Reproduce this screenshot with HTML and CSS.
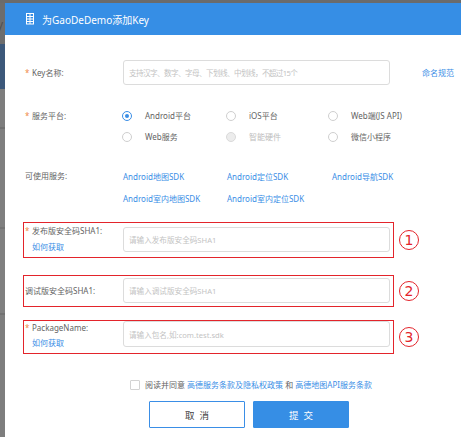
FILE: index.html
```html
<!DOCTYPE html>
<html lang="zh">
<head>
<meta charset="utf-8">
<title>为GaoDeDemo添加Key</title>
<link rel="stylesheet" href="styles.css">
</head>
<body>
<div class="page">
  <div class="backdrop"><span class="ghost">y</span></div>
  <div class="modal">
    <div class="modal-header">
      <svg class="hicon" width="8" height="12" viewBox="0 0 8 12" aria-hidden="true">
        <rect x="0.5" y="0.5" width="7" height="10.5" fill="none" stroke="#fff" stroke-width="1"/>
        <line x1="4" y1="1" x2="4" y2="11" stroke="#fff" stroke-width="1"/>
        <line x1="1" y1="3.5" x2="7" y2="3.5" stroke="#fff" stroke-width="1"/>
        <line x1="1" y1="6" x2="7" y2="6" stroke="#fff" stroke-width="1"/>
        <line x1="1" y1="8.5" x2="7" y2="8.5" stroke="#fff" stroke-width="1"/>
      </svg>
      <span class="title">为GaoDeDemo添加Key</span>
    </div>

    <div class="modal-body">
      <div class="row row-key">
        <div class="label"><span class="req">*</span>Key名称:</div>
        <div class="input"><span class="ph ph-tight">支持汉字、数字、字母、下划线、中划线，不超过15个</span></div>
        <a class="link side-link">命名规范</a>
      </div>

      <div class="row row-platform">
        <div class="label line"><span class="req">*</span>服务平台:</div>
        <div class="options">
          <div class="opt"><span class="radio checked"></span><span>Android平台</span></div>
          <div class="opt"><span class="radio"></span><span>iOS平台</span></div>
          <div class="opt"><span class="radio"></span><span>Web端(JS API)</span></div>
          <div class="opt"><span class="radio"></span><span>Web服务</span></div>
          <div class="opt disabled"><span class="radio"></span><span>智能硬件</span></div>
          <div class="opt"><span class="radio"></span><span>微信小程序</span></div>
        </div>
      </div>

      <div class="row row-services">
        <div class="label line2">可使用服务:</div>
        <div class="services">
          <a class="link">Android地图SDK</a>
          <a class="link">Android定位SDK</a>
          <a class="link">Android导航SDK</a>
          <a class="link">Android室内地图SDK</a>
          <a class="link">Android室内定位SDK</a>
        </div>
      </div>

      <div class="boxrow box1-row">
        <div class="box box1">
          <div class="blabel">
            <div><span class="req">*</span>发布版安全码SHA1:</div>
            <div class="indent"><a class="link">如何获取</a></div>
          </div>
          <div class="input"><span class="ph">请输入发布版安全码SHA1</span></div>
        </div>
        <span class="num">1</span>
      </div>

      <div class="boxrow box2-row">
        <div class="box box2">
          <div class="blabel single">调试版安全码SHA1:</div>
          <div class="input"><span class="ph">请输入调试版安全码SHA1</span></div>
        </div>
        <span class="num">2</span>
      </div>

      <div class="boxrow box3-row">
        <div class="box box3">
          <div class="blabel">
            <div><span class="req">*</span>PackageName:</div>
            <div class="indent"><a class="link">如何获取</a></div>
          </div>
          <div class="input tall"><span class="ph">请输入包名,如:com.test.sdk</span></div>
        </div>
        <span class="num">3</span>
      </div>

      <div class="agree">
        <span class="checkbox"></span>
        <span>阅读并同意 <a class="link">高德服务条款及隐私权政策</a> 和 <a class="link">高德地图API服务条款</a></span>
      </div>

      <div class="actions">
        <button class="btn btn-cancel">取消</button>
        <button class="btn btn-submit">提交</button>
      </div>
    </div>
  </div>
</div>
</body>
</html>
```

FILE: styles.css
```css
* { box-sizing: border-box; }
html, body { margin: 0; padding: 0; }
body {
  width: 461px;
  height: 437px;
  overflow: hidden;
  font-family: "Noto Sans", "Noto Sans CJK SC", sans-serif;
  font-size: 8px;
  color: #636363;
  background: #6e6e6e;
}
.page {
  display: flex;
  height: 437px;
  padding-top: 3px;
  background: #6b6b6b;
}
.backdrop {
  width: 5px;
  flex: none;
  position: relative;
  overflow: hidden;
  background:
    linear-gradient(#6d6d6d 0, #6d6d6d 41px, #3c587a 41px, #3c587a 86px,
      #7d7d7d 86px, #7d7d7d 124px, #707070 124px, #707070 126px,
      #7f7f7f 126px, #7f7f7f 224px, #747474 224px, #747474 226px,
      #808080 226px, #808080 310px, #727272 310px, #727272 312px, #7e7e7e 312px);
}
.ghost {
  position: absolute;
  left: -3px;
  top: 13px;
  font-size: 12px;
  color: #4f4f4f;
}
.modal {
  width: 480px;
  flex: none;
  background: #fff;
  display: flex;
  flex-direction: column;
}
.modal-header {
  height: 32px;
  background: #368ee5;
  display: flex;
  align-items: center;
  padding-left: 21px;
  gap: 8px;
}
.hicon { display: block; margin-top: -1px; }
.title {
  color: #fff;
  font-size: 10px;
}
.modal-body {
  padding-left: 18px;
  display: flex;
  flex-direction: column;
}
.link { color: #3a8ee6; text-decoration: none; }
.req {
  display: inline-block;
  width: 7px;
  color: #f08a4b;
}

.row { display: flex; }
.label {
  width: 100px;
  flex: none;
  padding-left: 2px;
}
.input {
  width: 267px;
  height: 25px;
  border: 1px solid #dcdcdc;
  border-radius: 3px;
  display: flex;
  align-items: center;
  padding-left: 5px;
  flex: none;
  background: #fff;
}
.input.tall { height: 26px; }
.ph { color: #c3c3c3; font-size: 7.6px; }
.ph-tight { letter-spacing: -0.6px; }

.row-key {
  margin-top: 25px;
  align-items: center;
  height: 25px;
}
.side-link { margin-left: 32px; }

.row-platform { margin-top: 20px; }
.label.line { line-height: 21px; }
.options {
  display: grid;
  grid-template-columns: 104px 102px auto;
  grid-auto-rows: 21px;
}
.opt {
  display: flex;
  align-items: center;
  gap: 13px;
}
.radio {
  width: 10px;
  height: 10px;
  border: 1px solid #cfcfcf;
  border-radius: 50%;
  flex: none;
  background: #fff;
  position: relative;
  margin-left: -1px;
}
.radio.checked { border-color: #3a8ee6; }
.radio.checked::after {
  content: "";
  position: absolute;
  left: 2px; top: 2px;
  width: 4px; height: 4px;
  border-radius: 50%;
  background: #3a8ee6;
}
.opt.disabled { color: #bdbdbd; }
.opt.disabled .radio { background: #ececec; border-color: #dadada; }

.row-services { margin-top: 18px; }
.label.line2 { line-height: 22px; }
.services {
  display: grid;
  grid-template-columns: 104px 105px auto;
  grid-auto-rows: 22px;
  align-items: center;
}

.boxrow {
  display: flex;
  align-items: center;
  gap: 5px;
}
.box1-row { margin-top: 13px; }
.box2-row { margin-top: 17px; }
.box3-row { margin-top: 13px; }
.box {
  width: 371px;
  border: 1px solid #e3242b;
  display: flex;
  padding-right: 3px;
}
.box1 { padding-top: 4px; padding-bottom: 2px; }
.box1 .blabel { margin-top: -4px; line-height: 16px; }
.box2 { padding-top: 2px; padding-bottom: 3px; align-items: center; }
.box3 { padding-top: 0; padding-bottom: 3px; }
.box3 .blabel { line-height: 15px; margin-top: -1px; }
.blabel {
  width: 99px;
  flex: none;
  padding-left: 1px;
}
.indent { padding-left: 7px; }
.num {
  width: 20px;
  height: 20px;
  border: 1px solid #e3242b;
  border-radius: 50%;
  display: flex;
  align-items: center;
  justify-content: center;
  color: #e3242b;
  font-family: "DejaVu Sans", sans-serif;
  font-size: 14px;
  line-height: 1;
  flex: none;
}

.agree {
  margin-top: 24px;
  padding-left: 107px;
  display: flex;
  align-items: center;
  gap: 5px;
  line-height: 14px;
}
.checkbox {
  width: 10px;
  height: 10px;
  border: 1px solid #d3d3d3;
  border-radius: 1px;
  background: #fff;
  flex: none;
}
.actions {
  margin-top: 9px;
  padding-left: 126px;
  display: flex;
  gap: 8px;
}
.btn {
  width: 96px;
  height: 27px;
  font-family: "Noto Sans CJK SC", sans-serif;
  font-size: 9.5px;
  letter-spacing: 5px;
  text-indent: 5px;
  border-radius: 1px;
  cursor: pointer;
  padding: 0;
}
.btn-cancel {
  background: #fff;
  border: 1px solid #3a8ee6;
  color: #444;
}
.btn-submit {
  background: #368ee5;
  border: 1px solid #368ee5;
  color: #fff;
}
```
